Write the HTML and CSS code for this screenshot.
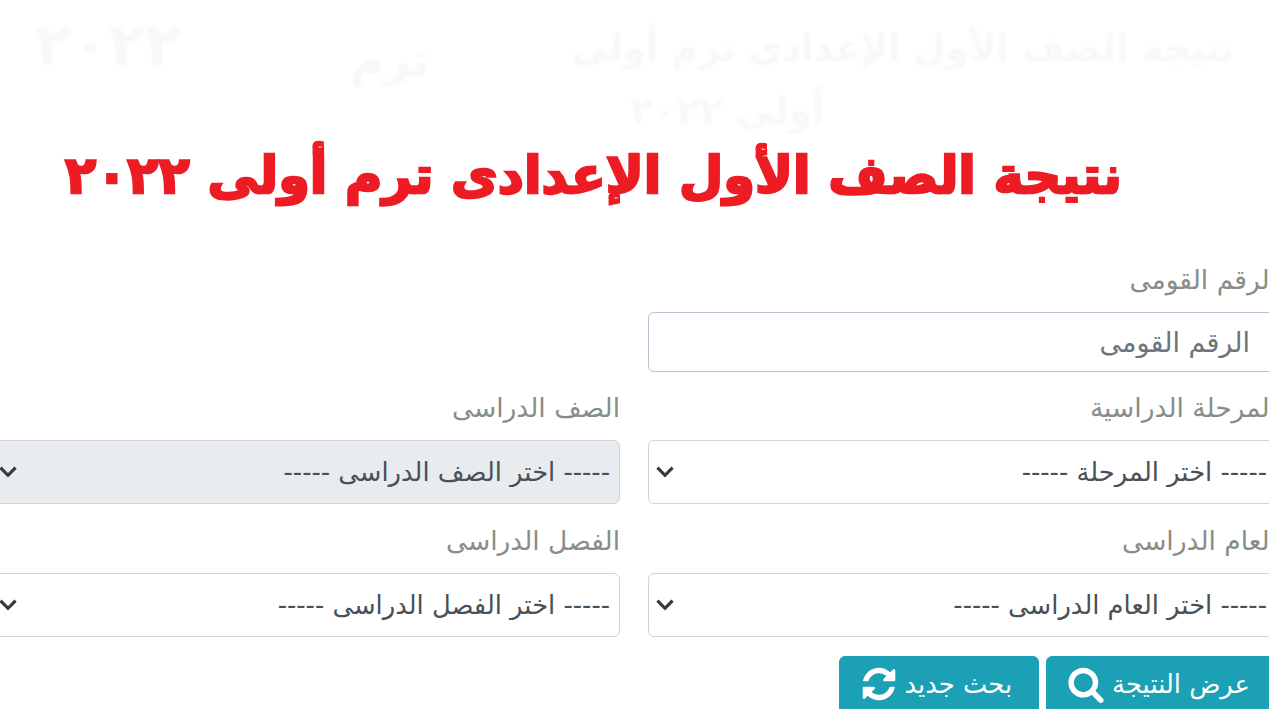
FILE: index.html
```html
<!doctype html>
<html lang="ar" dir="rtl">
    <head>
        <meta charset="utf-8">
        <title>نتيجة الصف الأول الإعدادى ترم أولى ٢٠٢٢</title>
        <link rel="stylesheet" href="styles.css">
    </head>
    <body>
        <div class="banner">
            <!-- faint copies of the title behind the main one -->
            <div class="ghost ghost-title" aria-hidden="true">نتيجة الصف الأول الإعدادى ترم أولى</div>
            <div class="ghost ghost-sub" aria-hidden="true">أولى ٢٠٢٢</div>
            <div class="ghost ghost-term" aria-hidden="true">ترم</div>
            <div class="ghost ghost-year" aria-hidden="true">٢٠٢٢</div>
            <h1 class="banner-title">نتيجة الصف الأول الإعدادى ترم أولى ٢٠٢٢</h1>
        </div>

        <form class="result-form">
            <div class="form-group">
                <label for="national-id">الرقم القومى</label>
                <input id="national-id" type="text" class="form-control form-control-input" placeholder="الرقم القومى">
            </div>
            <div class="form-group"></div>

            <div class="form-group">
                <label for="stage">المرحلة الدراسية</label>
                <div class="select-wrap">
                    <select id="stage" class="form-control">
                        <option>----- اختر المرحلة -----</option>
                    </select>
                    <svg class="select-arrow" viewBox="0 0 18 12"><path d="M2 2.5l7 7 7-7"/></svg>
                </div>
            </div>
            <div class="form-group">
                <label for="grade">الصف الدراسى</label>
                <div class="select-wrap">
                    <select id="grade" class="form-control" disabled>
                        <option>----- اختر الصف الدراسى -----</option>
                    </select>
                    <svg class="select-arrow" viewBox="0 0 18 12"><path d="M2 2.5l7 7 7-7"/></svg>
                </div>
            </div>

            <div class="form-group">
                <label for="year">العام الدراسى</label>
                <div class="select-wrap">
                    <select id="year" class="form-control">
                        <option>----- اختر العام الدراسى -----</option>
                    </select>
                    <svg class="select-arrow" viewBox="0 0 18 12"><path d="M2 2.5l7 7 7-7"/></svg>
                </div>
            </div>
            <div class="form-group">
                <label for="term">الفصل الدراسى</label>
                <div class="select-wrap">
                    <select id="term" class="form-control">
                        <option>----- اختر الفصل الدراسى -----</option>
                    </select>
                    <svg class="select-arrow" viewBox="0 0 18 12"><path d="M2 2.5l7 7 7-7"/></svg>
                </div>
            </div>

            <div class="form-actions">
                <button type="button" class="btn btn-info">
                    عرض النتيجة
                    <svg class="btn-icon" viewBox="0 0 1792 1792"><path d="M1216 832q0-185-131.5-316.5t-316.5-131.5-316.5 131.5-131.5 316.5 131.5 316.5 316.5 131.5 316.5-131.5 131.5-316.5zm512 832q0 52-38 90t-90 38q-54 0-90-38l-343-342q-179 124-399 124-143 0-273.5-55.5t-225-150-150-225-55.5-273.5 55.5-273.5 150-225 225-150 273.5-55.5 273.5 55.5 225 150 150 225 55.5 273.5q0 220-124 399l343 343q37 37 37 90z"/></svg>
                </button>
                <button type="button" class="btn btn-info">
                    بحث جديد
                    <svg class="btn-icon" viewBox="0 0 1792 1792"><path d="M1639 1056q0 5-1 7-64 268-268 434.5t-478 166.5q-146 0-282.5-55t-243.5-157l-129 129q-19 19-45 19t-45-19-19-45v-448q0-26 19-45t45-19h448q26 0 45 19t19 45-19 45l-137 137q71 66 161 102t187 36q134 0 250-65t186-179q11-17 53-117 8-23 30-23h192q13 0 22.5 9.5t9.5 22.5zm25-800v448q0 26-19 45t-45 19h-448q-26 0-45-19t-19-45 19-45l138-138q-148-137-349-137-134 0-250 65t-186 179q-11 17-53 117-8 23-30 23h-199q-13 0-22.5-9.5t-9.5-22.5v-7q65-268 270-434.5t480-166.5q146 0 284 55.5t245 156.5l130-129q19-19 45-19t45 19 19 45z"/></svg>
                </button>
            </div>
        </form>
    </body>
</html>
```

FILE: styles.css
```css
html,
body {
    margin: 0;
    height: 709px;
    overflow: hidden;
    background: #fff;
}

body {
    font-family: "DejaVu Sans", sans-serif;
    color: #495057;
}

.banner {
    position: relative;
    height: 262px;
    padding: 140px 147px 0 0;
    box-sizing: border-box;
}

.banner-title {
    position: relative;
    margin: 0;
    font-size: 51px;
    line-height: 72px;
    font-weight: bold;
    color: #ed1c24;
    -webkit-text-stroke: 2.5px #ed1c24;
    white-space: nowrap;
}

.ghost {
    position: absolute;
    color: #f8f8f8;
    font-weight: bold;
    white-space: nowrap;
    filter: blur(1px);
}

.ghost-title {
    top: 24px;
    right: 34px;
    font-size: 37px;
    line-height: 50px;
}

.ghost-sub {
    top: 86px;
    left: 630px;
    font-size: 38px;
    line-height: 50px;
}

.ghost-term {
    top: 30px;
    left: 350px;
    font-size: 46px;
    line-height: 60px;
}

.ghost-year {
    top: 14px;
    left: 35px;
    font-size: 60px;
    line-height: 60px;
}

.result-form {
    display: grid;
    grid-template-columns: 629px 629px;
    column-gap: 28px;
    width: 1286px;
    margin-right: -8px;
}

.form-group {
    display: flex;
    flex-direction: column;
    margin-bottom: 19px;
}

.form-group label {
    color: #868e88;
    font-size: 26.5px;
    line-height: 36px;
    height: 36px;
    margin-bottom: 14px;
}

.select-wrap {
    position: relative;
}

.select-arrow {
    position: absolute;
    top: 25px;
    left: 7px;
    width: 20px;
    height: 13px;
    fill: none;
    stroke: #343a40;
    stroke-width: 3;
    pointer-events: none;
}

.form-control {
    display: block;
    box-sizing: border-box;
    width: 100%;
    height: 64px;
    padding: 0 9px;
    font-family: inherit;
    font-size: 25.8px;
    color: #495057;
    background-color: #fff;
    border: 1px solid #ced4da;
    border-radius: 6px;
    appearance: none;
}

.form-control-input {
    height: 60px;
    margin-bottom: -1px;
    border-color: #b8c4d4;
    padding-right: 26px;
    font-size: 27px;
}

.form-control-input::placeholder {
    color: #6c757d;
    opacity: 1;
}

.form-control:disabled {
    background-color: #e9ecef;
    opacity: 1;
    color: #495057;
}

.form-actions {
    grid-column: 1 / -1;
    display: flex;
    gap: 7px;
}

.btn {
    display: flex;
    align-items: center;
    gap: 7px;
    height: 66px;
    padding: 0 26px 10px 20px;
    font-family: inherit;
    font-size: 25.8px;
    color: #fff;
    background-color: #1ba0b5;
    border: 1px solid #1ba0b5;
    border-radius: 6px;
}

.btn-icon {
    width: 38px;
    height: 38px;
    fill: #fff;
}
```
